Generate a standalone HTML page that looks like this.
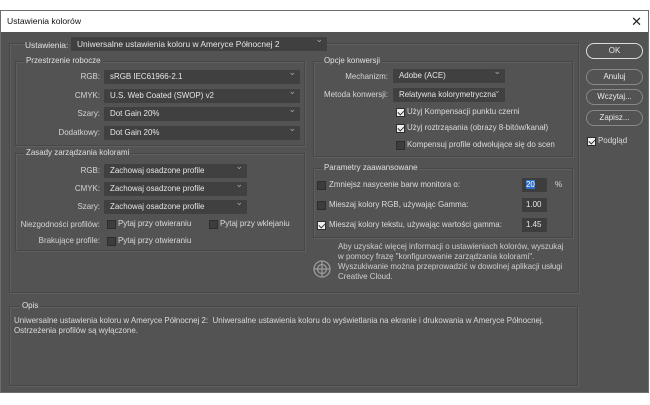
<!DOCTYPE html>
<html><head><meta charset="utf-8"><style>
*{box-sizing:border-box;margin:0;padding:0}
body{width:650px;height:405px;background:#fff;position:relative;overflow:hidden;font-family:"Liberation Sans",sans-serif;font-size:7.95px;color:#dcdcdc}
.a{position:absolute;white-space:nowrap}
#win{position:absolute;left:0;top:10px;width:649px;height:383px;border:1px solid #6e6e6e;background:#535353}
#title{position:absolute;left:0;top:0;width:647px;height:21px;background:#fff;color:#111;font-size:8.6px;padding:5px 0 0 6px}
.g{position:absolute;border:1px solid #474747;box-shadow:inset 1px 1px 0 #5f5f5f,1px 1px 0 #5f5f5f}
.gl{position:absolute;background:#535353;padding:0 2px;color:#e0e0e0;top:-6px;left:8px}
.sel{position:absolute;background:#404040;color:#e6e6e6;height:14px;padding:2px 0 0 6px;border-radius:1px;overflow:hidden}
.sel:after{content:"⌄";position:absolute;right:4px;top:-3px;font-size:9px;color:#aaa}
.lb{position:absolute;text-align:right;white-space:nowrap;color:#d6d6d6}
.cb{position:absolute;width:9px;height:9px;background:#3d3d3d;border:1px solid #2e2e2e}
.cb.on{background:#eee}
.cb.on:after{content:"";position:absolute;left:2px;top:0px;width:3px;height:5px;border:solid #333;border-width:0 1.5px 1.5px 0;transform:rotate(45deg)}
.btn{position:absolute;left:586px;width:57px;height:16px;border:1.3px solid #bbb;border-radius:8px;text-align:center;color:#e8e8e8;padding-top:2px}
.inp{position:absolute;background:#3d3d3d;height:14px;width:25px;padding:2px 0 0 4px;color:#e6e6e6}
</style></head><body>
<div id="win">
<div id="title">Ustawienia kolorów</div>
<div class="a" style="right:6px;top:3px;color:#222;font-size:13px">✕</div>
</div>
<div class="g" style="left:9px;top:43px;width:570px;height:250px"></div>
<div class="lb" style="left:25px;top:40px;color:#e0e0e0;font-size:8.4px">Ustawienia:</div>
<div class="sel" style="left:71px;top:37px;width:256px;height:14px;font-size:8.4px">Uniwersalne ustawienia koloru w Ameryce Północnej 2</div>

<div class="g" style="left:15px;top:61px;width:290px;height:85px"><span class="gl">Przestrzenie robocze</span></div>
<div class="lb" style="left:30px;width:70px;top:72px">RGB:</div>
<div class="sel" style="left:104px;top:70px;width:196px">sRGB IEC61966-2.1</div>
<div class="lb" style="left:30px;width:70px;top:91px">CMYK:</div>
<div class="sel" style="left:104px;top:89px;width:196px">U.S. Web Coated (SWOP) v2</div>
<div class="lb" style="left:30px;width:70px;top:109px">Szary:</div>
<div class="sel" style="left:104px;top:107px;width:196px">Dot Gain 20%</div>
<div class="lb" style="left:30px;width:70px;top:128px">Dodatkowy:</div>
<div class="sel" style="left:104px;top:126px;width:196px">Dot Gain 20%</div>

<div class="g" style="left:15px;top:153px;width:290px;height:98px"><span class="gl">Zasady zarządzania kolorami</span></div>
<div class="lb" style="left:30px;width:70px;top:166px">RGB:</div>
<div class="sel" style="left:104px;top:164px;width:143px">Zachowaj osadzone profile</div>
<div class="lb" style="left:30px;width:70px;top:184px">CMYK:</div>
<div class="sel" style="left:104px;top:182px;width:143px">Zachowaj osadzone profile</div>
<div class="lb" style="left:30px;width:70px;top:202px">Szary:</div>
<div class="sel" style="left:104px;top:200px;width:143px">Zachowaj osadzone profile</div>
<div class="lb" style="left:10px;width:90px;top:220px">Niezgodności profilów:</div>
<div class="cb" style="left:107px;top:220px"></div><div class="a" style="left:118px;top:219px">Pytaj przy otwieraniu</div>
<div class="cb" style="left:209px;top:220px"></div><div class="a" style="left:220px;top:219px">Pytaj przy wklejaniu</div>
<div class="lb" style="left:10px;width:90px;top:236px">Brakujące profile:</div>
<div class="cb" style="left:107px;top:237px"></div><div class="a" style="left:118px;top:236px">Pytaj przy otwieraniu</div>

<div class="g" style="left:313px;top:61px;width:260px;height:96px"><span class="gl">Opcje konwersji</span></div>
<div class="lb" style="left:320px;width:68px;top:72px">Mechanizm:</div>
<div class="sel" style="left:393px;top:69px;width:112px">Adobe (ACE)</div>
<div class="lb" style="left:318px;width:70px;top:90px">Metoda konwersji:</div>
<div class="sel" style="left:393px;top:88px;width:112px">Relatywna kolorymetryczna</div>
<div class="cb on" style="left:396px;top:108px"></div><div class="a" style="left:407px;top:107px">Użyj Kompensacji punktu czerni</div>
<div class="cb on" style="left:396px;top:124px"></div><div class="a" style="left:407px;top:123px">Użyj roztrząsania (obrazy 8-bitów/kanał)</div>
<div class="cb" style="left:396px;top:141px"></div><div class="a" style="left:407px;top:140px">Kompensuj profile odwołujące się do scen</div>

<div class="g" style="left:313px;top:168px;width:260px;height:70px"><span class="gl">Parametry zaawansowane</span></div>
<div class="cb" style="left:317px;top:181px"></div><div class="a" style="left:329px;top:180px">Zmniejsz nasycenie barw monitora o:</div>
<div class="inp" style="left:522px;top:178px"><span style="background:#2d6fd0;color:#fff">20</span></div><div class="a" style="left:555px;top:180px">%</div>
<div class="cb" style="left:317px;top:201px"></div><div class="a" style="left:329px;top:200px">Mieszaj kolory RGB, używając Gamma:</div>
<div class="inp" style="left:522px;top:198px">1.00</div>
<div class="cb on" style="left:317px;top:221px"></div><div class="a" style="left:329px;top:220px">Mieszaj kolory tekstu, używając wartości gamma:</div>
<div class="inp" style="left:522px;top:218px">1.45</div>

<svg class="a" style="left:312px;top:259px" width="20" height="20" viewBox="0 0 20 20" fill="none" stroke="#9a9a9a" stroke-width="1.3"><circle cx="10" cy="10" r="8"/><circle cx="10" cy="10" r="4.5"/><path d="M10 2v16M2 10h16"/></svg>
<div class="a" style="left:338px;top:242px;line-height:10px;color:#cfcfcf">Aby uzyskać więcej informacji o ustawieniach kolorów, wyszukaj<br>w pomocy frazę "konfigurowanie zarządzania kolorami".<br>Wyszukiwanie można przeprowadzić w dowolnej aplikacji usługi<br>Creative Cloud.</div>

<div class="g" style="left:9px;top:306px;width:569px;height:80px"><span class="gl" style="left:10px">Opis</span></div>
<div class="a" style="left:14px;top:316px;line-height:10px">Uniwersalne ustawienia koloru w Ameryce Północnej 2:&nbsp; Uniwersalne ustawienia koloru do wyświetlania na ekranie i drukowania w Ameryce Północnej.<br>Ostrzeżenia profilów są wyłączone.</div>

<div class="btn" style="top:43px;border-color:#ddd">OK</div>
<div class="btn" style="top:69px;border-color:#888">Anuluj</div>
<div class="btn" style="top:89px;border-color:#888">Wczytaj...</div>
<div class="btn" style="top:110px;border-color:#888">Zapisz...</div>
<div class="cb on" style="left:587px;top:137px"></div><div class="a" style="left:598px;top:136px">Podgląd</div>
</body></html>
